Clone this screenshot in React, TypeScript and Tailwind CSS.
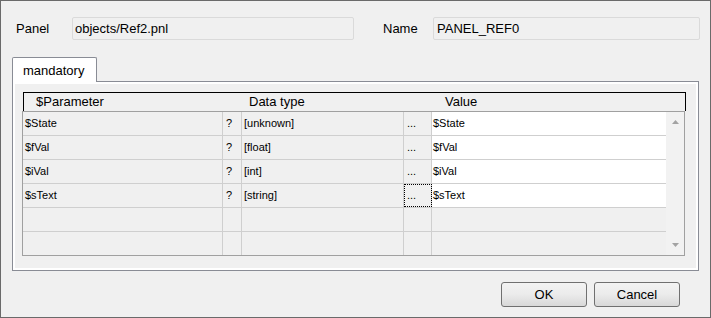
import React from "react";

type Param = { name: string; type: string };

const params: Param[] = [
  { name: "$State", type: "[unknown]" },
  { name: "$fVal", type: "[float]" },
  { name: "$iVal", type: "[int]" },
  { name: "$sText", type: "[string]" },
];

const Row = ({ p, last, focus }: { p?: Param; last?: boolean; focus?: boolean }) => {
  const line = last ? "h-[23px]" : "h-[24px] border-b border-[#cfcfcf]";
  return (
    <div className={`flex text-[11px] leading-[23px] text-black ${line}`}>
      <div className="w-[200px] border-r border-[#cfcfcf] pl-[2px]">{p?.name}</div>
      <div className="w-[19px] border-r border-[#cfcfcf] pl-[3px]">{p ? "?" : ""}</div>
      <div className="w-[162px] border-r border-[#cfcfcf] pl-[2px]">{p?.type}</div>
      <div
        className={`w-[28px] border-r border-[#cfcfcf] pl-[3px] ${
          focus ? "outline-1 outline-dotted outline-black -outline-offset-1" : ""
        }`}
      >
        {p ? "..." : ""}
      </div>
      <div className={`w-[234px] pl-[1px] ${p ? "bg-white" : ""}`}>{p?.name}</div>
    </div>
  );
};

export default function App() {
  return (
    <div className="w-[711px] h-[318px] border border-[#6a6a6a] bg-[#f0f0f0] font-[Liberation_Sans,Arial,sans-serif] text-[13px] text-black flex flex-col">
      {/* top fields */}
      <div className="flex items-center pl-[15px] pt-[16px]">
        <div className="w-[56px]">Panel</div>
        <div className="w-[282px] h-[23px] border border-[#dadada] rounded-[2px] pl-[2px] leading-[21px]">
          objects/Ref2.pnl
        </div>
        <div className="w-[50px] ml-[29px]">Name</div>
        <div className="w-[267px] h-[23px] border border-[#dadada] rounded-[2px] pl-[3px] leading-[21px]">
          PANEL_REF0
        </div>
      </div>

      {/* tab */}
      <div className="mt-[17px] ml-[11px] flex">
        <div className="relative z-10 -mb-px w-[85px] h-[25px] bg-white border border-b-0 border-[#898c95] rounded-t-[2px] pl-[10px] leading-[25px]">
          mandatory
        </div>
      </div>

      {/* pane */}
      <div className="ml-[11px] w-[687px] h-[190px] border border-[#898c95] p-[2px] bg-white">
        <div className="h-full bg-[#f0f0f0] pl-[7px] pt-[8px]">
          <div className="ml-px w-[663px] h-[19px] border-t border-l border-r border-black flex leading-[18px]">
            <div className="w-[225px] pl-[12px]">$Parameter</div>
            <div className="w-[196px]">Data type</div>
            <div>Value</div>
          </div>
          <div className="flex w-[663px] border border-[#a0a0a0]">
            <div className="flex flex-col">
              {params.map((p, i) => (
                <Row key={p.name} p={p} focus={i === 3} />
              ))}
              <Row />
              <Row last />
            </div>
            <div className="w-[18px] bg-[#f2f2f2] flex flex-col items-center justify-between py-[8px]">
              <svg width="7" height="4" viewBox="0 0 7 4">
                <path d="M3.5 0 L7 4 L0 4 Z" fill="#a3a3a3" />
              </svg>
              <svg width="7" height="4" viewBox="0 0 7 4">
                <path d="M0 0 L7 0 L3.5 4 Z" fill="#a3a3a3" />
              </svg>
            </div>
          </div>
        </div>
      </div>

      {/* buttons */}
      <div className="flex justify-end gap-[7px] pr-[30px] mt-[11px]">
        <button className="w-[86px] h-[25px] border border-[#707070] rounded-[3px] bg-linear-to-b from-[#f3f3f3] via-[#ebebeb] to-[#d8d8d8]">
          OK
        </button>
        <button className="w-[86px] h-[25px] border border-[#707070] rounded-[3px] bg-linear-to-b from-[#f3f3f3] via-[#ebebeb] to-[#d8d8d8]">
          Cancel
        </button>
      </div>
    </div>
  );
}
